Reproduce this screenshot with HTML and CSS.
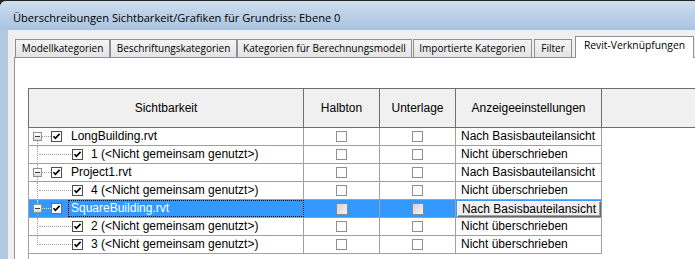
FILE: index.html
```html
<!DOCTYPE html>
<html lang="de">
<head>
<meta charset="utf-8">
<title>Sichtbarkeit/Grafiken</title>
<link rel="stylesheet" href="styles.css">
</head>
<body>
<div class="window">
  <div class="titlebar"><span class="title">Überschreibungen Sichtbarkeit/Grafiken für Grundriss: Ebene 0</span></div>
  <div class="frame">
    <div class="client">
      <div class="tabs">
        <div class="tab w1">Modellkategorien</div>
        <div class="tab w2">Beschriftungskategorien</div>
        <div class="tab w3">Kategorien für Berechnungsmodell</div>
        <div class="tab w4">Importierte Kategorien</div>
        <div class="tab w5">Filter</div>
        <div class="tab active">Revit-Verknüpfungen</div>
      </div>
      <div class="panel">
        <div class="table">
          <div class="thead">
            <div class="th">Sichtbarkeit</div>
            <div class="th">Halbton</div>
            <div class="th">Unterlage</div>
            <div class="th">Anzeigeeinstellungen</div>
            <div class="th th-fill"></div>
          </div>

          <div class="row">
            <div class="td tree root">
              <span class="exp"></span><span class="hl"></span>
              <svg class="cb" viewBox="0 0 11 11"><rect x="0.5" y="0.5" width="10" height="10" fill="#fff" stroke="#4d4d4d"/><path d="M2.5 5.2 L4.4 7.3 L8.6 2.9" fill="none" stroke="#000" stroke-width="1.7"/></svg>
              <span class="label">LongBuilding.rvt</span>
            </div>
            <div class="td chk"><span class="box"></span></div>
            <div class="td chk"><span class="box"></span></div>
            <div class="td disp">Nach Basisbauteilansicht</div>
            <div class="td-fill"></div>
          </div>

          <div class="row">
            <div class="td tree child">
              <svg class="cb" viewBox="0 0 11 11"><rect x="0.5" y="0.5" width="10" height="10" fill="#fff" stroke="#4d4d4d"/><path d="M2.5 5.2 L4.4 7.3 L8.6 2.9" fill="none" stroke="#000" stroke-width="1.7"/></svg>
              <span class="label">1 (&lt;Nicht gemeinsam genutzt&gt;)</span>
            </div>
            <div class="td chk"><span class="box"></span></div>
            <div class="td chk"><span class="box"></span></div>
            <div class="td disp">Nicht überschrieben</div>
            <div class="td-fill"></div>
          </div>

          <div class="row">
            <div class="td tree root above">
              <span class="exp"></span><span class="hl"></span>
              <svg class="cb" viewBox="0 0 11 11"><rect x="0.5" y="0.5" width="10" height="10" fill="#fff" stroke="#4d4d4d"/><path d="M2.5 5.2 L4.4 7.3 L8.6 2.9" fill="none" stroke="#000" stroke-width="1.7"/></svg>
              <span class="label">Project1.rvt</span>
            </div>
            <div class="td chk"><span class="box"></span></div>
            <div class="td chk"><span class="box"></span></div>
            <div class="td disp">Nach Basisbauteilansicht</div>
            <div class="td-fill"></div>
          </div>

          <div class="row">
            <div class="td tree child">
              <svg class="cb" viewBox="0 0 11 11"><rect x="0.5" y="0.5" width="10" height="10" fill="#fff" stroke="#4d4d4d"/><path d="M2.5 5.2 L4.4 7.3 L8.6 2.9" fill="none" stroke="#000" stroke-width="1.7"/></svg>
              <span class="label">4 (&lt;Nicht gemeinsam genutzt&gt;)</span>
            </div>
            <div class="td chk"><span class="box"></span></div>
            <div class="td chk"><span class="box"></span></div>
            <div class="td disp">Nicht überschrieben</div>
            <div class="td-fill"></div>
          </div>

          <div class="row selected">
            <div class="td tree root above">
              <span class="exp"></span><span class="hl"></span>
              <svg class="cb" viewBox="0 0 11 11"><rect x="0.5" y="0.5" width="10" height="10" fill="#fff" stroke="#6d6d6d"/><path d="M2.5 5.2 L4.4 7.3 L8.6 2.9" fill="none" stroke="#000" stroke-width="1.7"/></svg>
              <span class="label focus">SquareBuilding.rvt</span>
            </div>
            <div class="td chk"><span class="box dis"></span></div>
            <div class="td chk"><span class="box dis"></span></div>
            <div class="td disp"><span class="btn">Nach Basisbauteilansicht</span></div>
            <div class="td-fill"></div>
          </div>

          <div class="row">
            <div class="td tree child">
              <svg class="cb" viewBox="0 0 11 11"><rect x="0.5" y="0.5" width="10" height="10" fill="#fff" stroke="#4d4d4d"/><path d="M2.5 5.2 L4.4 7.3 L8.6 2.9" fill="none" stroke="#000" stroke-width="1.7"/></svg>
              <span class="label">2 (&lt;Nicht gemeinsam genutzt&gt;)</span>
            </div>
            <div class="td chk"><span class="box"></span></div>
            <div class="td chk"><span class="box"></span></div>
            <div class="td disp">Nicht überschrieben</div>
            <div class="td-fill"></div>
          </div>

          <div class="row">
            <div class="td tree child last">
              <svg class="cb" viewBox="0 0 11 11"><rect x="0.5" y="0.5" width="10" height="10" fill="#fff" stroke="#4d4d4d"/><path d="M2.5 5.2 L4.4 7.3 L8.6 2.9" fill="none" stroke="#000" stroke-width="1.7"/></svg>
              <span class="label">3 (&lt;Nicht gemeinsam genutzt&gt;)</span>
            </div>
            <div class="td chk"><span class="box"></span></div>
            <div class="td chk"><span class="box"></span></div>
            <div class="td disp">Nicht überschrieben</div>
            <div class="td-fill"></div>
          </div>
          <div class="rest"></div>
        </div>
      </div>
    </div>
  </div>
</div>
</body>
</html>
```

FILE: styles.css
```css
* { box-sizing: border-box; }
html, body { margin: 0; padding: 0; }
body {
  width: 695px;
  height: 259px;
  overflow: hidden;
  background: #262626;
  font-family: "Liberation Sans", Arial, sans-serif;
  color: #000;
}

.window {
  margin-top: 1px;
  width: 740px;
  height: 300px;
  display: flex;
  flex-direction: column;
  background: #b3c9e2;
  border-top-left-radius: 6px;
  overflow: hidden;
}

.titlebar {
  height: 29px;
  flex: none;
  padding-left: 13px;
  display: flex;
  align-items: center;
  background: linear-gradient(to bottom, #cfdff0 0%, #bcd1e8 45%, #a9c3df 100%);
}
.title {
  font-family: "Open Sans", "Noto Sans", sans-serif;
  font-size: 11.1px;
  color: #000;
  padding-top: 3px;
}

.frame {
  flex: 1;
  display: flex;
  padding-left: 8px;
}

.client {
  flex: 1;
  background: #f0f0f0;
  padding: 6px 0 0 6px;
  display: flex;
  flex-direction: column;
}

.tabs {
  height: 21px;
  display: flex;
  align-items: flex-end;
  padding-left: 1px;
}
.tab {
  height: 18px;
  border: 1px solid #8d9095;
  border-bottom: none;
  background: linear-gradient(to bottom, #f4f4f4, #e4e4e4);
  font-family: "Open Sans", "Noto Sans", sans-serif;
  font-size: 10px;
  color: #000;
  display: flex;
  align-items: center;
  justify-content: center;
  white-space: nowrap;
  padding-bottom: 1px;
}
.w1 { width: 95px; }
.w2 { width: 127px; }
.w3 { width: 175px; }
.w4 { width: 119px; margin-left: 1px; }
.w5 { width: 38px; margin-left: 2px; }
.tab.active {
  width: 119px;
  margin-left: 3px;
  height: 22px;
  margin-bottom: -1px;
  background: #fff;
  position: relative;
  z-index: 2;
  padding-bottom: 5px;
  font-size: 10.3px;
}

.panel {
  flex: 1;
  position: relative;
  z-index: 1;
  background: #fff;
  border-top: 1px solid #8d9095;
  border-left: 1px solid #8d9095;
  padding: 30px 0 0 13px;
}

.table {
  border-left: 1px solid #a0a0a0;
  font-size: 12px;
}

.thead {
  margin-left: -1px;
  border-left: 1px solid #6f6f6f;
  border-top: 1px solid #6f6f6f;
  display: grid;
  grid-template-columns: 275px 76px 76px 146px 1fr;
  height: 40px;
  background: #f0f0f0;
}
.th {
  border-right: 1px solid #6f6f6f;
  border-bottom: 1px solid #6f6f6f;
  display: flex;
  align-items: center;
  justify-content: center;
  padding-bottom: 1px;
}
.th-fill { border-right: none; }

.row {
  display: grid;
  grid-template-columns: 275px 76px 76px 146px 1fr;
  height: 18px;
  line-height: 17px;
}
.td {
  border-right: 1px solid #a0a0a0;
  border-bottom: 1px solid #a0a0a0;
  display: flex;
  align-items: center;
  white-space: nowrap;
}
.selected .td { background: #3399ff; }

.tree { position: relative; }
.root { padding-left: 4px; }
.child { padding-left: 43px; }

.exp {
  width: 9px;
  height: 9px;
  flex: none;
  border: 1px solid #919191;
  background: linear-gradient(to bottom, #ffffff, #dcdcdc);
  position: relative;
  z-index: 1;
}
.exp::after {
  content: "";
  position: absolute;
  left: 1px;
  top: 3px;
  width: 5px;
  height: 1px;
  background: #2f3f5f;
}
.hl {
  width: 9px;
  flex: none;
  border-top: 1px dotted #a0a0a0;
}
.selected .hl { border-top-color: #d8e8ff; }

.root::after {
  content: "";
  position: absolute;
  left: 8px;
  top: 13px;
  bottom: -1px;
  border-left: 1px dotted #a0a0a0;
}
.root.above::before {
  content: "";
  position: absolute;
  left: 8px;
  top: 0;
  height: 4px;
  border-left: 1px dotted #a0a0a0;
}
.selected .root::before { border-left-color: #d8e8ff; }
.child::before {
  content: "";
  position: absolute;
  left: 8px;
  top: 0;
  bottom: -1px;
  border-left: 1px dotted #a0a0a0;
}
.child.last::before { bottom: auto; height: 9px; }
.child::after {
  content: "";
  position: absolute;
  left: 10px;
  top: 8px;
  width: 32px;
  border-top: 1px dotted #a0a0a0;
}

.cb {
  width: 11px;
  height: 11px;
  flex: none;
  display: block;
}

.label {
  height: 17px;
  border: 1px dotted transparent;
  padding-left: 2px;
  margin-left: 6px;
  flex: 1;
  display: flex;
  align-items: center;
}
.child .label { margin-left: 5px; }
.label.focus {
  border-color: #000;
  color: #fff;
  margin-right: -1px;
}

.chk { justify-content: center; }
.box {
  width: 11px;
  height: 11px;
  border: 1px solid #8f8f8f;
  background: #fff;
}
.box.dis {
  width: 12px;
  height: 12px;
  border-color: #8a8a8a;
  background: linear-gradient(135deg, #d2d2d2, #f4f4f4);
}

.disp { padding-left: 5px; }
.selected .disp { padding-left: 1px; }
.btn {
  width: 144px;
  height: 16px;
  background: #f0f0f0;
  border: 1px solid;
  border-color: #ffffff #696969 #696969 #ffffff;
  box-shadow: inset -1px -1px #a0a0a0;
  display: flex;
  align-items: center;
  justify-content: center;
  line-height: 14px;
}

.td-fill { background: #fff; }
.rest { height: 40px; }
```
